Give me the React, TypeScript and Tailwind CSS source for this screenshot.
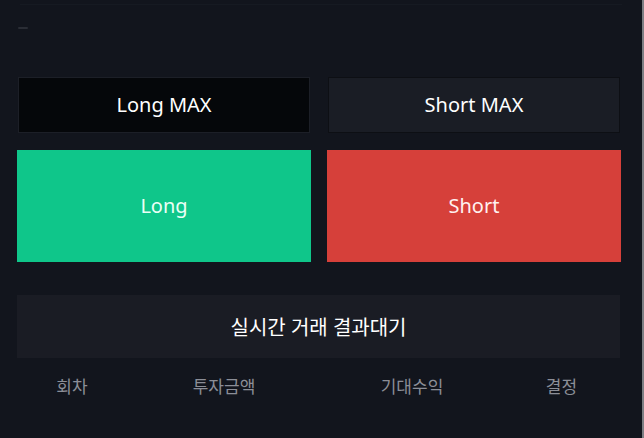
export default function App() {
  const font = { fontFamily: '"Noto Sans", "Noto Sans CJK KR", sans-serif' };
  return (
    <div className="w-[644px] h-[438px] bg-[#12151d] flex overflow-hidden" style={font}>
      <div className="w-[642px] h-full flex flex-col">
        <div className="h-[4px]" />
        <div className="h-px mx-[20px] bg-[#161a22]" />
        <div className="h-[72px] pl-[18px] pt-[22px]">
          <div className="w-[10px] h-[2px] bg-[#2a2d35] rounded" />
        </div>
        <div className="flex pl-[17px] gap-[16px]">
          <div className="w-[294px] h-[56px] px-px">
            <div className="w-full h-full bg-[#05070a] border border-[#1c1f27] flex items-center justify-center text-[20px] text-white">
              Long MAX
            </div>
          </div>
          <div className="w-[294px] h-[56px] px-px">
            <div className="w-full h-full bg-[#1a1d25] border border-[#0d0f14] flex items-center justify-center text-[20px] text-white">
              Short MAX
            </div>
          </div>
        </div>
        <div className="flex pl-[17px] gap-[16px] mt-[17px]">
          <div className="w-[294px] h-[112px] bg-[#0fc68a] flex items-center justify-center text-[20px] text-[#eafff6]">
            Long
          </div>
          <div className="w-[294px] h-[112px] bg-[#d6403a] flex items-center justify-center text-[20px] text-[#fff1f0]">
            Short
          </div>
        </div>
        <div className="ml-[17px] mt-[33px] w-[603px] h-[63px] bg-[#1a1c24] flex items-center justify-center pt-[2px] text-[20px] text-white">
          실시간 거래 결과대기
        </div>
        <div className="ml-[17px] w-[603px] mt-[16px] grid grid-cols-[110px_194px_182px_117px] text-[17px] text-[#8b8e97]">
          <div className="text-center">회차</div>
          <div className="text-center">투자금액</div>
          <div className="text-center">기대수익</div>
          <div className="text-center">결정</div>
        </div>
      </div>
      <div className="w-[2px] h-full bg-[#7d7f84]" />
    </div>
  );
}
